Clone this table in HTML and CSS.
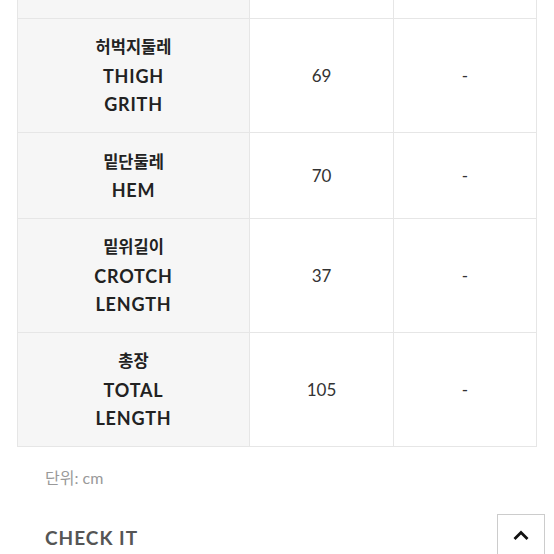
FILE: index.html
```html
<!DOCTYPE html>
<html lang="ko">
<head>
<meta charset="utf-8">
<link rel="stylesheet" href="styles.css">
</head>
<body>
<div class="page">
  <table class="size-table">
    <colgroup>
      <col class="c1"><col class="c2"><col class="c3">
    </colgroup>
    <tr class="top-row"><th></th><td></td><td></td></tr>
    <tr><th><span class="ko">허벅지둘레</span><br>THIGH<br>GRITH</th><td>69</td><td>-</td></tr>
    <tr><th><span class="ko">밑단둘레</span><br>HEM</th><td>70</td><td>-</td></tr>
    <tr><th><span class="ko">밑위길이</span><br>CROTCH<br>LENGTH</th><td>37</td><td>-</td></tr>
    <tr><th><span class="ko">총장</span><br>TOTAL<br>LENGTH</th><td>105</td><td>-</td></tr>
  </table>
  <p class="unit">단위: cm</p>
  <h2 class="check">CHECK IT</h2>
</div>
<button class="to-top" aria-label="top">
  <svg width="18" height="12" viewBox="0 0 18 12"><path d="M2.5 10 L9 3.5 L15.5 10" fill="none" stroke="#111" stroke-width="2.8"/></svg>
</button>
</body>
</html>
```
FILE: styles.css
```css
html, body { margin: 0; padding: 0; background: #fff; }
body { font-family: Lato, "Noto Sans CJK KR", sans-serif; color: #222; height: 554px; overflow: hidden; }
.page { padding: 0 18px 0 17px; }
.size-table { border-collapse: collapse; width: 519px; table-layout: fixed; }
.c1 { width: 232px; }
.c2 { width: 144px; }
.c3 { width: 143px; }
.size-table th, .size-table td { border: 1px solid #e6e6e6; text-align: center; vertical-align: middle; padding: 0; line-height: 28.5px; }
.size-table th { background: #f6f6f6; font-weight: 700; font-size: 18px; letter-spacing: 0.8px; color: #222; height: 113px; }
.size-table td { font-size: 17px; font-weight: 400; color: #333; padding-top: 2px; }
.size-table tr:nth-child(3) th { height: 85px; }
.ko { font-size: 16.5px; letter-spacing: 0; }
.size-table .top-row th, .size-table .top-row td { border-top: none; padding: 0; height: 18px; line-height: 18px; }
.unit { margin: 21px 0 0 28px; font-size: 16px; color: #999; line-height: 20px; }
.check { margin: 39px 0 0 28px; font-size: 19px; font-weight: 700; color: #555; letter-spacing: 1px; line-height: 22px; }
.to-top { position: fixed; left: 497px; top: 514px; width: 48px; height: 48px; background: #fff; border: 1px solid #ccc; padding: 0; display: flex; align-items: center; justify-content: center; box-sizing: border-box; }
.to-top svg { margin-top: -6px; }
```
